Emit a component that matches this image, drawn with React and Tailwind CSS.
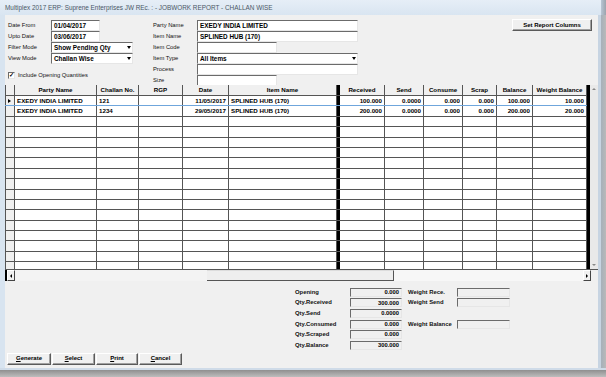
import React from 'react';

const leftCols = [
    { t: 'Party Name', w: 82, k: 'party' },
    { t: 'Challan No.', w: 42, k: 'challan' },
    { t: 'RGP', w: 44, k: 'rgp' },
    { t: 'Date', w: 46, k: 'date' },
    { t: 'Item Name', w: 108, k: 'item' },
];

const numCols = [
    { t: 'Received', w: 45, k: 'rec' },
    { t: 'Send', w: 39, k: 'send' },
    { t: 'Consume', w: 39, k: 'cons' },
    { t: 'Scrap', w: 34, k: 'scrap' },
    { t: 'Balance', w: 36, k: 'bal' },
    { t: 'Weight Balance', w: 54, k: 'wbal' },
];

const rows = [
    { party: 'EXEDY INDIA LIMITED', challan: '121', rgp: '', date: '11/05/2017', item: 'SPLINED HUB (170)', rec: '100.000', send: '0.0000', cons: '0.000', scrap: '0.000', bal: '100.000', wbal: '10.000' },
    { party: 'EXEDY INDIA LIMITED', challan: '1234', rgp: '', date: '29/05/2017', item: 'SPLINED HUB (170)', rec: '200.000', send: '0.0000', cons: '0.000', scrap: '0.000', bal: '200.000', wbal: '20.000' },
];

const emptyRows = Array.from({ length: 15 });

const sunken = 'border border-t-[#6b6b6b] border-l-[#6b6b6b] border-b-[#e6e6e6] border-r-[#e6e6e6]';

function Field({ label, value, w = 'w-[49px]', labelW = 'w-[43px]' }) {
    return (
        <div className="flex items-center h-[11px]">
            <span className={`${labelW} text-[5.8px] text-[#111]`}>{label}</span>
            <div className={`${w} h-[11px] bg-white ${sunken} flex items-center px-[2px] font-bold text-[6.4px] text-black`}>
                {value}
            </div>
        </div>
    );
}

function Select({ label, value, w, labelW = 'w-[43px]' }) {
    return (
        <div className="flex items-center h-[11px]">
            <span className={`${labelW} text-[5.8px] text-[#111]`}>{label}</span>
            <div className={`${w} h-[11px] bg-white ${sunken} flex items-center pl-[2px] font-bold text-[6.4px] text-black`}>
                <span className="flex-1">{value}</span>
                <span className="w-[7px] h-[8px] flex items-center justify-center">
                    <span className="w-0 h-0 border-l-[2px] border-r-[2px] border-t-[3px] border-l-transparent border-r-transparent border-t-black" />
                </span>
            </div>
        </div>
    );
}

function Btn({ children, w }) {
    return (
        <div className={`${w} h-[12px] bg-[#f0f0f0] border border-t-white border-l-white border-b-[#5a5a5a] border-r-[#5a5a5a] shadow-[inset_-1px_-1px_0_#a0a0a0] flex items-center justify-center font-bold text-[6px] text-black`}>
            {children}
        </div>
    );
}

function Stat({ label, value, label2 }) {
    return (
        <div className="flex items-center h-[10.6px]">
            <span className="w-[55px] font-bold text-[5.9px] text-[#111]">{label}</span>
            <div className={`w-[52px] h-[9px] bg-[#f0f0f0] ${sunken} flex items-center justify-end pr-[2px] font-bold text-[5.8px] text-black`}>
                {value}
            </div>
            {label2 !== undefined && (
                <>
                    <span className="w-[55px] pl-[6px] font-bold text-[5.9px] text-[#111]">{label2}</span>
                    <div className={`w-[53px] h-[9px] bg-[#f0f0f0] ${sunken}`} />
                </>
            )}
        </div>
    );
}

function GridRow({ r, first }) {
    const line = first ? 'border-b-[#6fa6dc]' : 'border-b-[#555]';
    return (
        <div className={`flex h-[10.4px] border-b ${line} shrink-0`}>
            <div className="w-[10px] shrink-0 bg-[#f0f0f0] border-l border-r border-[#555] flex items-center pl-[2px]">
                {first && <span className="w-0 h-0 border-t-[2.5px] border-b-[2.5px] border-l-[3px] border-t-transparent border-b-transparent border-l-black" />}
            </div>
            {leftCols.map((c) => (
                <div key={c.k} style={{ width: c.w }} className={`shrink-0 bg-white border-r border-[#555] px-[2px] flex items-center font-bold text-[6.2px] text-black whitespace-nowrap overflow-hidden ${c.k === 'date' ? 'justify-end' : ''}`}>
                    {r ? r[c.k] : ''}
                </div>
            ))}
            <div className="w-[3px] shrink-0 bg-black" />
            {numCols.map((c) => (
                <div key={c.k} style={{ width: c.w }} className="shrink-0 bg-white border-r border-[#555] px-[2px] flex items-center justify-end font-bold text-[6.2px] text-black whitespace-nowrap">
                    {r ? r[c.k] : ''}
                </div>
            ))}
        </div>
    );
}

export default function App() {
    return (
        <div className="w-[606px] h-[377px] flex flex-col overflow-hidden bg-[#9a9a9a] font-['Liberation_Sans',Arial,sans-serif]">
            {/* title bar */}
            <div className="h-[15px] shrink-0 flex">
                <div className="flex-1 bg-gradient-to-b from-[#e6eef7] to-[#d9e5f1] flex items-center pl-[5px] text-[6.4px] text-[#4b5866]">
                    Multiplex 2017 ERP: Suprene Enterprises JW REc. : - JOBWORK REPORT - CHALLAN WISE
                </div>
                <div className="w-[5px] bg-gradient-to-r from-[#b8c6d5] to-[#9ba3ac]" />
            </div>

            <div className="flex flex-1 min-h-0">
                <div className="w-[5px] bg-[#d8e4f0]" />
                <div className="w-[593px] bg-[#f0f0f0] flex flex-col">
                    {/* filter form */}
                    <div className="h-[70px] shrink-0 flex pl-[3px] pt-[5px]">
                        <div className="w-[145px] flex flex-col">
                            <Field label="Date From" value="01/04/2017" />
                            <Field label="Upto Date" value="03/06/2017" />
                            <Select label="Filter Mode" value="Show Pending Qty" w="w-[82px]" />
                            <Select label="View Mode" value="Challan Wise" w="w-[82px]" />
                            <div className="flex items-center gap-[3px] mt-[7px] h-[8px]">
                                <span className={`w-[7px] h-[7px] bg-white ${sunken} flex items-center justify-center text-[6px] font-bold leading-none text-black`}>✓</span>
                                <span className="text-[5.8px] text-[#111]">Include Opening Quantities</span>
                            </div>
                        </div>
                        <div className="w-[208px] flex flex-col">
                            <Field label="Party Name" value="EXEDY INDIA LIMITED" w="w-[161px]" labelW="w-[44px]" />
                            <Field label="Item Name" value="SPLINED HUB (170)" w="w-[161px]" labelW="w-[44px]" />
                            <Field label="Item Code" value="" w="w-[80px]" labelW="w-[44px]" />
                            <Select label="Item Type" value="All Items" w="w-[161px]" labelW="w-[44px]" />
                            <Field label="Process" value="" w="w-[161px]" labelW="w-[44px]" />
                            <Field label="Size" value="" w="w-[80px]" labelW="w-[44px]" />
                        </div>
                        <div className="flex-1 flex justify-end pr-[6px]">
                            <div className="-mt-[1px]">
                                <Btn w="w-[80px]">Set Report Columns</Btn>
                            </div>
                        </div>
                    </div>

                    {/* grid */}
                    <div className="h-[196px] shrink-0 flex flex-col">
                        <div className="h-[184px] flex">
                            <div className="w-[582px] flex flex-col overflow-hidden bg-white">
                                <div className="flex h-[11px] shrink-0 border-b border-[#555]">
                                    <div className="w-[10px] shrink-0 bg-[#f0f0f0] border-l border-r border-[#555]" />
                                    {leftCols.map((c) => (
                                        <div key={c.k} style={{ width: c.w }} className="shrink-0 bg-[#f0f0f0] border-r border-[#555] flex items-center justify-center font-bold text-[6.2px] text-black">
                                            {c.t}
                                        </div>
                                    ))}
                                    <div className="w-[3px] shrink-0 bg-black" />
                                    {numCols.map((c) => (
                                        <div key={c.k} style={{ width: c.w }} className="shrink-0 bg-[#f0f0f0] border-r border-[#555] flex items-center justify-center font-bold text-[6.2px] text-black whitespace-nowrap">
                                            {c.t}
                                        </div>
                                    ))}
                                </div>
                                {rows.map((r, i) => (
                                    <GridRow key={i} r={r} first={i === 0} />
                                ))}
                                {emptyRows.map((_, i) => (
                                    <GridRow key={'e' + i} />
                                ))}
                            </div>
                            <div className="w-[3px] bg-black" />
                            <div className="w-[8px] bg-[#e9e9e9] flex flex-col justify-between items-center py-[3px]">
                                <span className="w-0 h-0 border-l-[2px] border-r-[2px] border-b-[2px] border-l-transparent border-r-transparent border-b-[#888]" />
                                <span className="w-0 h-0 border-l-[2px] border-r-[2px] border-t-[2px] border-l-transparent border-r-transparent border-t-[#888]" />
                            </div>
                        </div>
                        {/* horizontal scroll */}
                        <div className="h-[12px] flex items-stretch bg-[#f3f3f3] border-t border-[#555]">
                            <div className="w-[2px] bg-black" />
                            <div className="w-[8px] bg-[#f0f0f0] border border-t-white border-l-white border-b-[#444] border-r-[#444] flex items-center justify-center">
                                <span className="w-0 h-0 border-t-[2px] border-b-[2px] border-r-[2px] border-t-transparent border-b-transparent border-r-black" />
                            </div>
                            <div className="w-[192px]" />
                            <div className="w-[187px] bg-[#eeeeee] border-b border-r border-[#555] border-t border-t-[#dcdcdc]" />
                            <div className="flex-1 bg-[#f7f7f7]" />
                            <div className="w-[8px] bg-[#f0f0f0] border border-t-white border-l-white border-b-[#444] border-r-[#444] flex items-center justify-center">
                                <span className="w-0 h-0 border-t-[2px] border-b-[2px] border-l-[2px] border-t-transparent border-b-transparent border-l-black" />
                            </div>
                            <div className="w-[7px] bg-[#f0f0f0]" />
                        </div>
                    </div>

                    {/* totals */}
                    <div className="flex-1 flex flex-col">
                        <div className="pl-[290px] pt-[6px] flex flex-col">
                            <Stat label="Opening" value="0.000" label2="Weight Rece." />
                            <Stat label="Qty.Received" value="300.000" label2="Weight Send" />
                            <Stat label="Qty.Send" value="0.0000" />
                            <Stat label="Qty.Consumed" value="0.000" label2="Weight Balance" />
                            <Stat label="Qty.Scraped" value="0.000" />
                            <Stat label="Qty.Balance" value="300.000" />
                        </div>
                        <div className="flex gap-[1px] pl-[2px] mt-[2px]">
                            <Btn w="w-[44px]"><span><u>G</u>enerate</span></Btn>
                            <Btn w="w-[43px]"><span><u>S</u>elect</span></Btn>
                            <Btn w="w-[42px]"><span><u>P</u>rint</span></Btn>
                            <Btn w="w-[43px]"><span><u>C</u>ancel</span></Btn>
                        </div>
                    </div>
                </div>
                <div className="w-[3px] bg-[#c7d4e2]" />
                <div className="w-[5px] bg-gradient-to-r from-[#a6b0ba] to-[#b9b9b9]" />
            </div>
            <div className="h-[9px] shrink-0 flex flex-col">
                <div className="h-[2px] bg-[#cfdbe8]" />
                <div className="flex-1 bg-gradient-to-b from-[#8f8f8f] to-[#bdbdbd]" />
            </div>
        </div>
    );
}
